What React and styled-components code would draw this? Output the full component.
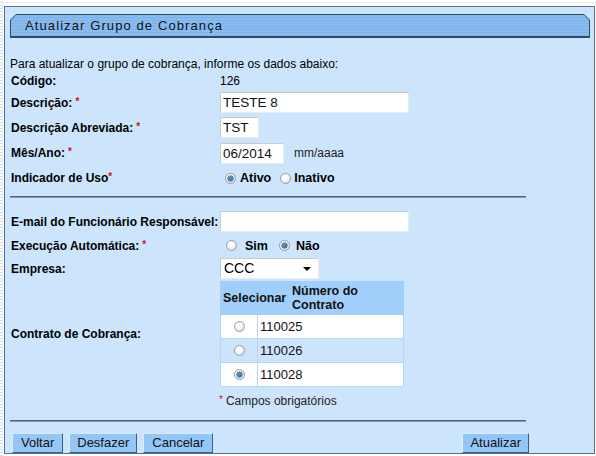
import React from "react";
import styled, { createGlobalStyle, css } from "styled-components";

const Global = createGlobalStyle`
  html, body { margin: 0; padding: 0; background: #fff; }
  body { font-family: "Liberation Sans", Arial, sans-serif; font-size: 12px; color: #000; }
`;

const Page = styled.div`
  display: flex;
  width: 596px;
  height: 456px;
  box-sizing: border-box;
  padding-top: 6px;
  padding-bottom: 2px;
  background: linear-gradient(#fff 0 2px, #e4ecf4 2px 3px, #fff 3px);
`;

const Strip = styled.div`
  width: 5px;
  margin-top: -6px;
  margin-bottom: -2px;
  margin-right: 1px;
  background: repeating-linear-gradient(#fff 0 2px, #c9d9ea 2px 3px);
  border-right: 1px solid #e8eef5;
  box-sizing: border-box;
`;

const Panel = styled.div`
  flex: 1;
  margin-right: 1px;
  background: #cce5fd;
  border: 1px solid #55708c;
  border-top-color: #5f7a95;
  padding: 7px 4px 0 5px;
  box-sizing: border-box;
  display: flex;
  flex-direction: column;
`;

const TitleOuter = styled.div`
  background: #2e4b68;
  padding: 1px 1px 2px 1px;
  width: 578px;
  clip-path: polygon(6px 0, calc(100% - 6px) 0, 100% 6px, 100% 100%, 0 100%, 0 6px);
`;

const TitleInner = styled.div`
  height: 21px;
  display: flex;
  align-items: center;
  padding-left: 14px;
  background: repeating-linear-gradient(#88bcf1 0 2px, #7eb3ea 2px 3px);
  clip-path: polygon(5px 0, calc(100% - 5px) 0, 100% 5px, 100% 100%, 0 100%, 0 5px);
  font-size: 13px;
  letter-spacing: 1.1px;
  color: #111;
`;

const Row = styled.div`
  display: grid;
  grid-template-columns: 209px 1fr;
  align-items: center;
  height: ${(p) => p.$h}px;
`;

const Intro = styled.div`
  margin-top: ${(p) => p.$mt}px;
  height: 16px;
  line-height: 16px;
`;

const Label = styled.div`
  font-weight: bold;
  padding-left: 1px;
  white-space: nowrap;
`;

const Req = styled.span`
  color: #d01010;
  font-size: 10px;
  vertical-align: top;
  margin-left: 3px;
`;

const Value = styled.div`
  padding-left: 1px;
  display: flex;
  align-items: center;
`;

const Input = styled.div`
  width: ${(p) => p.$w}px;
  height: 21px;
  box-sizing: border-box;
  background: #fff;
  border: 1px solid;
  border-color: #c4ccd4 #e8edf2 #e8edf2 #c4ccd4;
  font-size: 13.5px;
  line-height: 19px;
  padding-left: 2px;
  color: #111;
`;

const Hint = styled.span`
  margin-left: 10px;
  font-size: 12px;
  color: #222;
`;

const RadioGroup = styled.div`
  display: flex;
  align-items: center;
  padding-left: ${(p) => p.$pl}px;
  font-weight: bold;
  font-size: 12.5px;
`;

const RadioDot = styled.span`
  display: inline-block;
  width: 11px;
  height: 11px;
  border-radius: 50%;
  box-sizing: border-box;
  border: 1px solid #9b9b9b;
  background: radial-gradient(circle at 40% 35%, #fff 0 30%, #d3d3d3 100%);
  position: relative;
  margin-right: ${(p) => p.$mr}px;
  ${(p) =>
    p.$on &&
    css`
      &::after {
        content: "";
        position: absolute;
        left: 2px;
        top: 2px;
        width: 5px;
        height: 5px;
        border-radius: 50%;
        background: radial-gradient(circle at 40% 35%, #4aa0e0, #1a5a90);
        box-shadow: 0 0 0 0.5px #1d3f5e;
      }
    `}
`;

const Opt = styled.span`
  margin-right: ${(p) => p.$mr}px;
`;

const Hr = styled.div`
  width: 516px;
  margin: ${(p) => p.$m};
  border-top: 1px solid #5a5f66;
  border-bottom: 1px solid #8c9aa8;
`;

const Select = styled.div`
  width: 99px;
  height: 21px;
  box-sizing: border-box;
  background: #fff;
  border: 1px solid;
  border-color: #c4ccd4 #e8edf2 #e8edf2 #c4ccd4;
  font-size: 14px;
  line-height: 19px;
  padding-left: 3px;
  display: flex;
  justify-content: space-between;
  align-items: center;
`;

const Caret = styled.span`
  width: 0;
  height: 0;
  border-left: 4px solid transparent;
  border-right: 4px solid transparent;
  border-top: 4px solid #000;
  margin-right: 7px;
`;

const Table = styled.div`
  width: 184px;
  display: flex;
  flex-direction: column;
`;

const THead = styled.div`
  height: 34px;
  background: #a1cffb;
  display: flex;
  align-items: center;
  font-weight: bold;
  font-size: 12.5px;
  line-height: 14px;
  color: #111;
`;

const Th = styled.div`
  width: ${(p) => p.$w}px;
  padding-left: ${(p) => p.$pl}px;
  box-sizing: border-box;
`;

const Tr = styled.div`
  display: grid;
  grid-template-columns: 36px 1fr;
  gap: 1px;
  padding: 1px;
  padding-top: 0;
  background: #b3d7f8;
  height: 23px;
`;

const TdR = styled.div`
  background: ${(p) => p.$bg};
  display: flex;
  align-items: center;
  justify-content: center;
`;

const Td = styled.div`
  background: ${(p) => p.$bg};
  display: flex;
  align-items: center;
  padding-left: 2px;
  font-size: 13px;
  color: #111;
`;

const Note = styled.div`
  font-size: 12px;
  color: #222;
`;

const Buttons = styled.div`
  width: 517px;
  display: flex;
  gap: 6px;
  padding-left: 2px;
  margin-top: 11px;
`;

const Btn = styled.div`
  height: 20px;
  box-sizing: border-box;
  padding: 0 ${(p) => p.$px}px;
  background: #93c6f6;
  border: 1px solid;
  border-color: #d8ecff #3f5f80 #3f5f80 #d8ecff;
  font-size: 13px;
  line-height: 18px;
  color: #111;
  ${(p) =>
    p.$right &&
    css`
      margin-left: auto;
    `}
`;

const contracts = [
  { n: "110025", bg: "#fff", on: false },
  { n: "110026", bg: "#cce5fd", on: false },
  { n: "110028", bg: "#fff", on: true },
];

export default function App() {
  return (
    <>
      <Global />
      <Page>
        <Strip />
        <Panel>
          <TitleOuter>
            <TitleInner>Atualizar Grupo de Cobrança</TitleInner>
          </TitleOuter>
          <Intro $mt={18}>Para atualizar o grupo de cobrança, informe os dados abaixo:</Intro>
          <Row $h={19}>
            <Label>Código:</Label>
            <Value>126</Value>
          </Row>
          <Row $h={24}>
            <Label>
              Descrição:<Req>*</Req>
            </Label>
            <Value>
              <Input $w={189}>TESTE 8</Input>
            </Value>
          </Row>
          <Row $h={26}>
            <Label>
              Descrição Abreviada:<Req>*</Req>
            </Label>
            <Value>
              <Input $w={39}>TST</Input>
            </Value>
          </Row>
          <Row $h={25}>
            <Label>
              Mês/Ano:<Req>*</Req>
            </Label>
            <Value>
              <Input $w={64}>06/2014</Input>
              <Hint>mm/aaaa</Hint>
            </Value>
          </Row>
          <Row $h={26}>
            <Label>
              Indicador de Uso<Req style={{ marginLeft: 0 }}>*</Req>
            </Label>
            <RadioGroup $pl={6}>
              <RadioDot $on $mr={4} />
              <Opt $mr={9}>Ativo</Opt>
              <RadioDot $mr={3} />
              <Opt $mr={0}>Inativo</Opt>
            </RadioGroup>
          </Row>
          <Hr $m="5px 0 11px 0" />
          <Row $h={25}>
            <Label>E-mail do Funcionário Responsável:</Label>
            <Value>
              <Input $w={189} />
            </Value>
          </Row>
          <Row $h={23}>
            <Label>
              Execução Automática:<Req>*</Req>
            </Label>
            <RadioGroup $pl={7}>
              <RadioDot $mr={8} />
              <Opt $mr={11}>Sim</Opt>
              <RadioDot $on $mr={6} />
              <Opt $mr={0}>Não</Opt>
            </RadioGroup>
          </Row>
          <Row $h={24}>
            <Label>Empresa:</Label>
            <Value>
              <Select>
                CCC
                <Caret />
              </Select>
            </Value>
          </Row>
          <Row $h={107}>
            <Label>Contrato de Cobrança:</Label>
            <Value>
              <Table>
                <THead>
                  <Th $w={66} $pl={3}>Selecionar</Th>
                  <Th $w={118} $pl={6}>
                    Número do
                    <br />
                    Contrato
                  </Th>
                </THead>
                {contracts.map((c) => (
                  <Tr key={c.n}>
                    <TdR $bg={c.bg}>
                      <RadioDot $on={c.on} $mr={0} />
                    </TdR>
                    <Td $bg={c.bg}>{c.n}</Td>
                  </Tr>
                ))}
              </Table>
            </Value>
          </Row>
          <Row $h={28}>
            <span />
            <Note>
              <Req style={{ marginLeft: 0, marginRight: 3 }}>*</Req>Campos obrigatórios
            </Note>
          </Row>
          <Hr $m="5px 0 0 0" />
          <Buttons>
            <Btn $px={8}>Voltar</Btn>
            <Btn $px={7}>Desfazer</Btn>
            <Btn $px={8}>Cancelar</Btn>
            <Btn $px={7} $right>
              Atualizar
            </Btn>
          </Buttons>
        </Panel>
      </Page>
    </>
  );
}
